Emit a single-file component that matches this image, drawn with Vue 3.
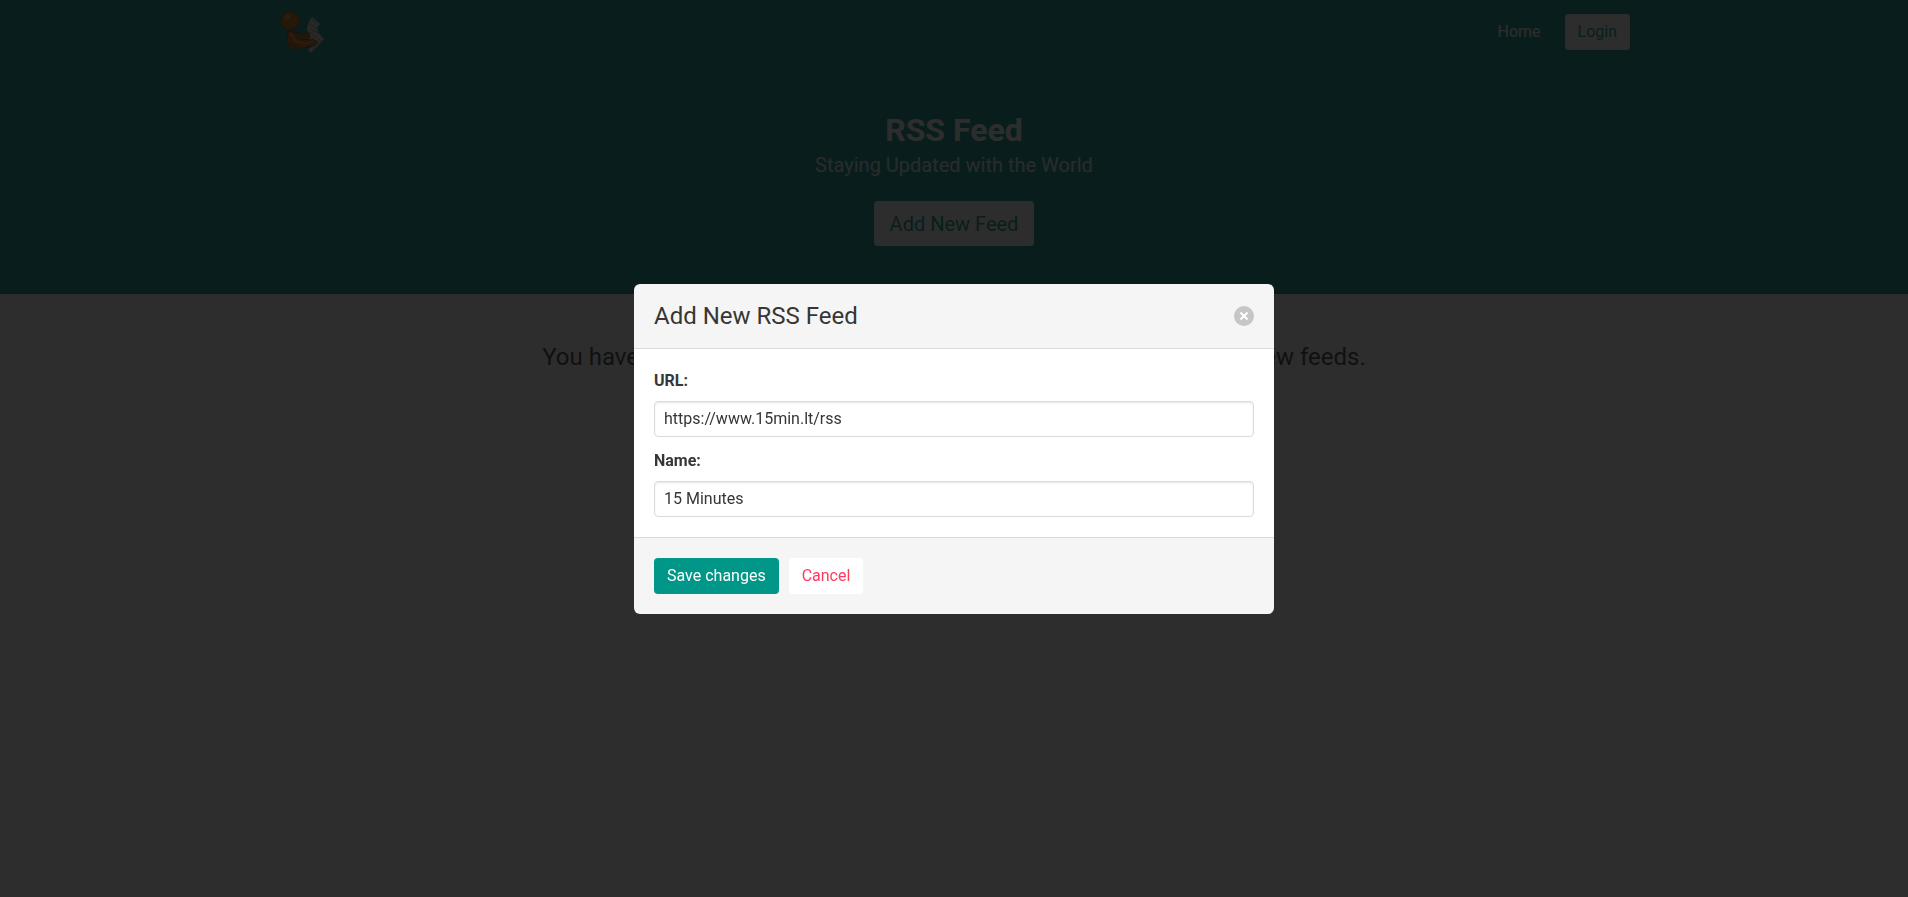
<script setup>
import { ref } from 'vue'

const url = ref('https://www.15min.lt/rss')
const name = ref('15 Minutes')
const open = ref(true)

function close() {
  open.value = false
}
</script>

<template>
  <div class="page">
    <header class="hero">
      <nav class="navbar">
        <a class="brand" href="#" aria-label="RSS Feed">
          <svg class="logo" viewBox="24 24 156 144" aria-hidden="true">
            <path d="M158 41l-7 4M147 45l-11 5" stroke="#777" stroke-width="3" />
            <path d="M126 51l13 11 12 9-10 13 4 14 17 20-18 20-22 20-8-7 14-14-16-20-1-34 5-15z" fill="#d3d7d5" />
            <path d="M126 60l16 12M121 72l17 13M119 84l16 12M119 96l34 26M118 108l31 22M131 128l10 9M125 137l9 8M130 92l16 7" stroke="#959c99" stroke-width="3" />
            <path d="M149 71l-17 19M160 118l-38 38" fill="none" stroke="#aab0ad" stroke-width="3" />
            <path d="M74 96l14 3 12 7 14-11 6 8-3 11-10 6-18-1-13-11z" fill="#bd6208" stroke="#5a3008" stroke-width="2" />
            <path d="M52 97c8-7 21-3 26 7 4 9 12 14 22 14l30 1c8 1 12 6 10 11-2 6-8 7-14 8-16 4-31 8-46 5l-3 8c-15-3-24-14-26-28z" fill="#c46808" stroke="#5a3008" stroke-width="2" />
            <path d="M61 101c5 11 11 19 23 26" fill="none" stroke="#ef9a3c" stroke-width="5" stroke-linecap="round" />
            <path d="M90 128c14 2 25 1 38-2" fill="none" stroke="#ef9a3c" stroke-width="5" stroke-linecap="round" />
            <path d="M57 125c5 8 12 13 22 17" fill="none" stroke="#5a3008" stroke-width="3" />
            <circle cx="60" cy="63" r="28" fill="#c46608" stroke="#6b3a08" stroke-width="2" />
            <path d="M37 75c11 15 33 17 45 0-1 8-10 14-22 15-11 0-19-5-23-15z" fill="#8c4a08" />
            <ellipse cx="53" cy="50" rx="11" ry="7" fill="#e89238" transform="rotate(-30 53 50)" />
          </svg>
        </a>
        <div class="nav-links">
          <a class="nav-home" href="#">Home</a>
          <a class="button light" href="#">Login</a>
        </div>
      </nav>
      <div class="hero-body">
        <h1>RSS Feed</h1>
        <p class="subtitle">Staying Updated with the World</p>
        <button class="button light large" type="button" @click="open = true">Add New Feed</button>
      </div>
    </header>

    <main class="section">
      <p class="empty">You haven't added new feeds yet. Click on the button above to add new feeds.</p>
    </main>

    <div v-if="open" class="modal">
      <form class="card" role="dialog" aria-modal="true" aria-labelledby="modal-title" @submit.prevent="close">
        <header class="card-head">
          <h2 id="modal-title">Add New RSS Feed</h2>
          <button class="delete" type="button" aria-label="Close" @click="close"></button>
        </header>
        <div class="card-body">
          <div class="field">
            <label for="feed-url">URL:</label>
            <input id="feed-url" v-model="url" type="text" />
          </div>
          <div class="field">
            <label for="feed-name">Name:</label>
            <input id="feed-name" v-model="name" type="text" />
          </div>
        </div>
        <footer class="card-foot">
          <button class="button primary" type="submit">Save changes</button>
          <button class="button cancel" type="button" @click="close">Cancel</button>
        </footer>
      </form>
    </div>
  </div>
</template>

<style>
body {
  margin: 0;
  background: #fff;
}
</style>

<style scoped>
.page {
  font-family: Roboto, "Liberation Sans", sans-serif;
  font-size: 16px;
  line-height: 24px;
  color: #363636;
}

.page * {
  box-sizing: border-box;
}

h1,
h2,
p {
  margin: 0;
}

.hero {
  background: #009688;
  color: #fff;
}

.navbar {
  display: flex;
  align-items: center;
  justify-content: space-between;
  max-width: 1352px;
  min-height: 64px;
  margin: 0 auto;
}

.brand,
.logo {
  display: block;
}

.logo {
  width: 52px;
  height: 48px;
}

.nav-links {
  display: flex;
  align-items: center;
  gap: 24px;
}

.nav-home {
  color: #fff;
  text-decoration: none;
}

.hero-body {
  display: flex;
  flex-direction: column;
  align-items: center;
  padding: 48px 24px;
  text-align: center;
}

h1 {
  font-size: 32px;
  line-height: 36px;
  font-weight: 700;
}

.subtitle {
  margin: 4px 0 23px;
  font-size: 20px;
  line-height: 26px;
  color: rgba(255, 255, 255, 0.9);
}

.button {
  display: inline-flex;
  align-items: center;
  justify-content: center;
  height: 36px;
  padding: 0 12px;
  border: 1px solid transparent;
  border-radius: 4px;
  font: inherit;
  line-height: 24px;
  text-decoration: none;
  white-space: nowrap;
  cursor: pointer;
}

.light {
  background: #fff;
  color: #009688;
}

.large {
  height: 45px;
  padding: 0 15px;
  font-size: 20px;
}

.primary {
  background: #009688;
  color: #fff;
}

.cancel {
  background: #fff;
  color: #ff3860;
}

.section {
  padding: 48px 24px;
}

.empty {
  font-size: 24px;
  line-height: 30px;
  text-align: center;
}

.modal {
  position: fixed;
  inset: 0;
  display: flex;
  align-items: center;
  justify-content: center;
  background: rgba(10, 10, 10, 0.86);
}

.card {
  width: 100%;
  max-width: 640px;
  border-radius: 6px;
  overflow: hidden;
}

.card-head {
  display: flex;
  align-items: center;
  justify-content: space-between;
  padding: 20px;
  border-bottom: 1px solid #dbdbdb;
  background: #f5f5f5;
}

h2 {
  font-size: 24px;
  line-height: 24px;
  font-weight: 400;
}

.delete {
  display: grid;
  place-items: center;
  width: 20px;
  height: 20px;
  padding: 0;
  border: 0;
  border-radius: 50%;
  background: rgba(10, 10, 10, 0.2);
  transform: rotate(45deg);
  cursor: pointer;
}

.delete::before,
.delete::after {
  content: "";
  grid-area: 1 / 1;
  background: #fff;
}

.delete::before {
  width: 10px;
  height: 2px;
}

.delete::after {
  width: 2px;
  height: 10px;
}

.card-body {
  display: grid;
  gap: 12px;
  padding: 20px;
  background: #fff;
}

.field {
  display: grid;
  gap: 8px;
}

label {
  font-weight: 700;
}

input {
  width: 100%;
  height: 36px;
  padding: 0 9px;
  border: 1px solid #dbdbdb;
  border-radius: 4px;
  background: #fff;
  box-shadow: inset 0 1px 2px rgba(10, 10, 10, 0.1);
  color: #363636;
  font: inherit;
}

.card-foot {
  display: flex;
  gap: 10px;
  padding: 20px;
  border-top: 1px solid #dbdbdb;
  background: #f5f5f5;
}
</style>
